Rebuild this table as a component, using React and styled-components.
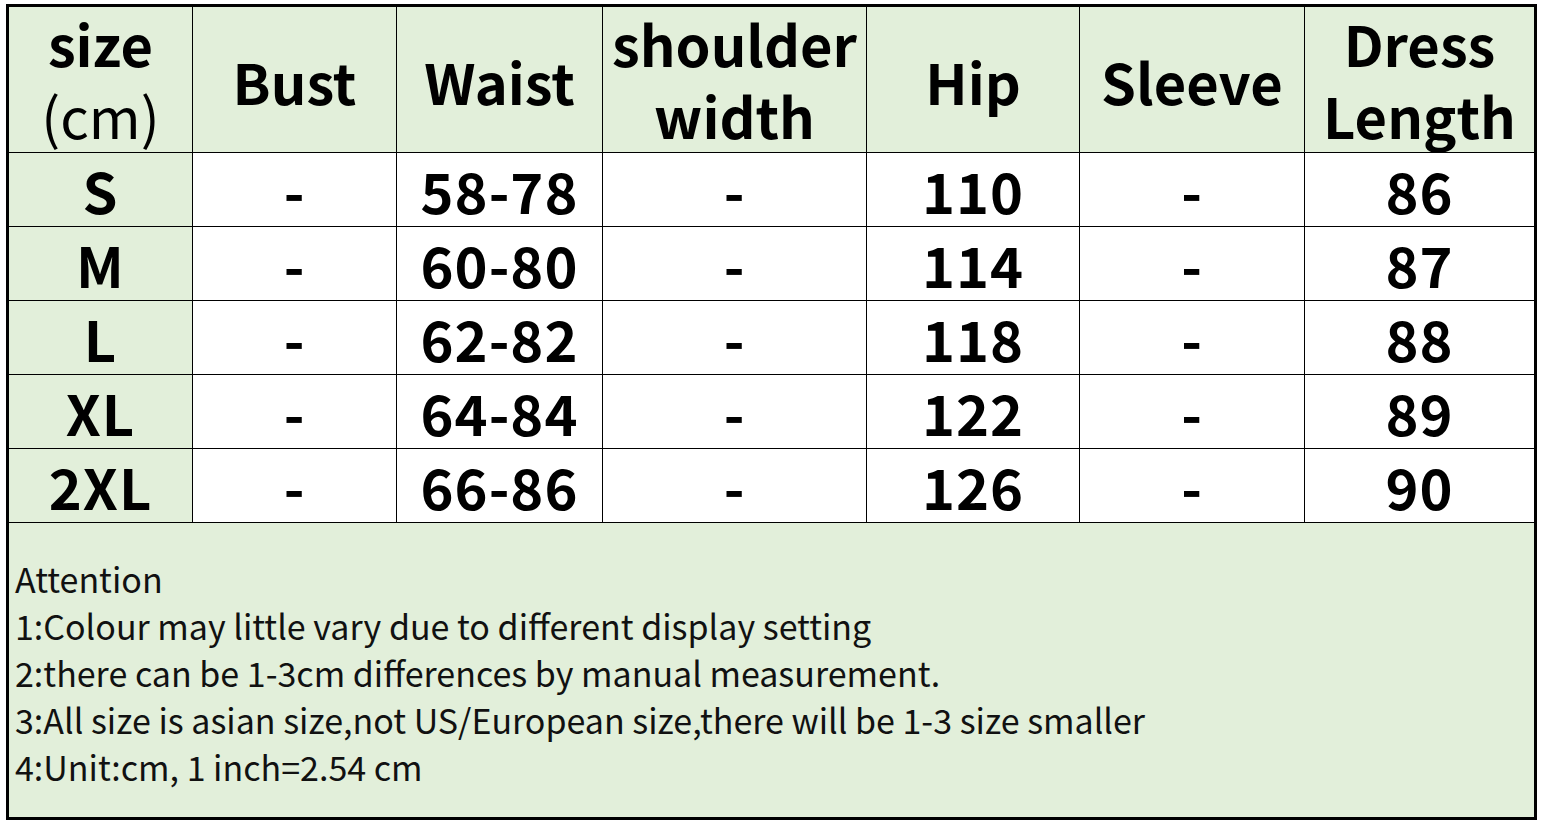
import React from 'react'
import styled, { createGlobalStyle } from 'styled-components'

const GlobalStyle = createGlobalStyle`
    html, body {
        margin : 0;
        padding : 0;
        background : #ffffff;
    }
    body {
        font-family : "Noto Sans CJK SC", "Noto Sans", sans-serif;
        color : #000000;
    }
`

const columns = ['size', 'Bust', 'Waist', 'shoulder', 'Hip', 'Sleeve', 'Dress']

const rows = [
    ['S', '-', '58-78', '-', '110', '-', '86'],
    ['M', '-', '60-80', '-', '114', '-', '87'],
    ['L', '-', '62-82', '-', '118', '-', '88'],
    ['XL', '-', '64-84', '-', '122', '-', '89'],
    ['2XL', '-', '66-86', '-', '126', '-', '90'],
]

const notes = [
    'Attention',
    '1:Colour may little vary due to different display setting',
    '2:there can be 1-3cm differences by manual measurement.',
    '3:All size is asian size,not US/European size,there will be 1-3 size smaller',
    '4:Unit:cm, 1 inch=2.54 cm',
]

const App = () => {
    return (
        <>
            <GlobalStyle />
            <Page>
                <Chart>
                    <HeadCell>
                        <TwoLine>
                            size<br />
                            <Light>(cm)</Light>
                        </TwoLine>
                    </HeadCell>
                    <HeadCell>Bust</HeadCell>
                    <HeadCell>Waist</HeadCell>
                    <HeadCell>
                        <TwoLine>{'shoulder\nwidth'}</TwoLine>
                    </HeadCell>
                    <HeadCell>Hip</HeadCell>
                    <HeadCell>Sleeve</HeadCell>
                    <HeadCell $last>
                        <TwoLine>{'Dress\nLength'}</TwoLine>
                    </HeadCell>

                    {rows.map((row) => (
                        row.map((value, i) => (
                            <Cell
                                key={row[0] + columns[i]}
                                $green={i === 0}
                                $last={i === row.length - 1}
                            >
                                {value}
                            </Cell>
                        ))
                    ))}

                    <Notes>
                        {notes.map((line) => (
                            <NoteLine key={line}>{line}</NoteLine>
                        ))}
                    </Notes>
                </Chart>
            </Page>
        </>
    )
}

const Page = styled.div`
    width : 1541px;
    height : 825px;
    padding : 4px 0 0 6px;
    box-sizing : border-box;
    overflow : hidden;
    background : #ffffff;
`

const Chart = styled.div`
    width : max-content;
    display : grid;
    grid-template-columns : 184px 204px 206px 264px 213px 225px 229px;
    grid-template-rows : 146px repeat(5, 74px) 294px;
    border : 3px solid #000000;
    background : #ffffff;
`

const BaseCell = styled.div`
    display : flex;
    align-items : center;
    justify-content : center;
    border-right : ${(p) => (p.$last ? 'none' : '1.5px solid #000000')};
    border-bottom : 1.5px solid #000000;
    font-weight : 700;
    font-size : 56px;
    line-height : 1;
    text-align : center;
`

const HeadCell = styled(BaseCell)`
    background : #e2efda;
    padding-top : 2px;
`

const Cell = styled(BaseCell)`
    background : ${(p) => (p.$green ? '#e2efda' : '#ffffff')};
    letter-spacing : 1px;
`

const TwoLine = styled.div`
    white-space : pre-line;
    line-height : 72px;
    margin-top : -4px;
`

const Light = styled.span`
    font-weight : 400;
`

const Notes = styled.div`
    grid-column : 1 / -1;
    background : #e2efda;
    padding : 32px 0 0 6px;
    display : flex;
    flex-direction : column;
`

const NoteLine = styled.div`
    font-size : 34px;
    line-height : 47px;
    font-weight : 400;
    color : #111111;
`

export default App
